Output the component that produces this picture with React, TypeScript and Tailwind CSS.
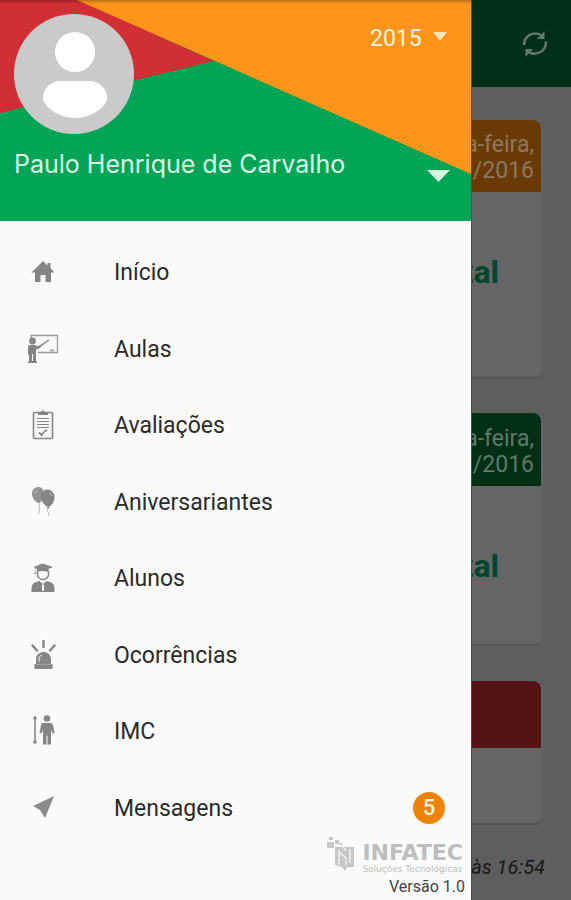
import { useState } from "react";
import type { ReactNode } from "react";

const HomeIcon = () => (
  <svg viewBox="0 0 32 32" className="w-8 h-8" fill="#858585">
    <path d="M16 5 4.500 16.500h3.500V26h5.500v-7h5v7H24v-9.500h3.500L23.500 12V7h-3v2.500z" />
  </svg>
);

const ClassIcon = () => (
  <svg viewBox="0 0 32 32" className="w-8 h-8" fill="none" stroke="#858585">
    <path d="M4 5V2.500h26.500v17H11" stroke="#999" strokeWidth="1.300" />
    <path d="M8 15.500 13 13l9-6" strokeWidth="1.500" />
    <path d="M23 17.500h4" strokeWidth="2" stroke="#aaa" />
    <circle cx="5.500" cy="8" r="3.400" fill="#858585" stroke="none" />
    <path
      d="M1 14q0-2 2-2h5l3 1.500 3-1.500.5 1.500-4 3-1.500-.5V28.500h1V30H1v-1.500h1v-7H1z"
      fill="#858585"
      stroke="none"
    />
    <path d="M5.500 21v7" stroke="#fafafa" />
  </svg>
);

const ClipboardIcon = () => (
  <svg viewBox="0 0 32 32" className="w-8 h-8" fill="none" stroke="#858585">
    <rect x="6.500" y="3.500" width="19" height="26" rx="1" strokeWidth="1.600" />
    <path d="M11 6V3.500h3a2 2 0 0 1 4 0h3V6z" fill="#858585" stroke="none" />
    <path d="M10 9.500h12M10 12.500h12M10 15.500h12M10 18.500h12" strokeWidth="1" />
    <path d="m12 23.500 2.500 2.500q2-3.500 5.500-5" strokeWidth="1.800" />
  </svg>
);

const BalloonsIcon = () => (
  <svg viewBox="0 0 32 32" className="w-8 h-8" fill="none">
    <path d="M12 17q1 5 0 11M21 21q-2 3 0 5t0 4" stroke="#bbb" />
    <path d="M5 7.500C5 3.500 8 1 11.500 1S17 4 17 8s-2.500 8-5 9C8 16 5 12 5 7.500z" fill="#929292" />
    <path d="M14 10.500c0-4 2.800-7 6.500-7s7 3 7 7.500-2.500 8.500-6 10l1.500 1.500h-3l1-1.500c-3.500-1.500-7-6-7-10.500z" fill="#858585" />
    <path d="M7.500 8q.5-3 3-3.500" stroke="#c4c4c4" />
    <path d="M24.500 10q0-2-2-3.500" stroke="#bbb" />
  </svg>
);

const StudentIcon = () => (
  <svg viewBox="0 0 32 32" className="w-8 h-8" fill="#858585">
    <path d="M15.500 1.500 26 5 21.500 7v3q-6-2-11.500 0V7L6.500 5z" />
    <path d="M8.200 6v4l-1 2h2l-.5-2V6z" />
    <path d="M10.500 9v3.500a5.500 5 0 0 0 11 0V9" fill="none" stroke="#858585" strokeWidth="1.500" />
    <path d="M4.500 30v-4q.5-5 4.500-6l3.500-1 3.500 3 3.500-3 3.500 1q4 1 4.500 6v4z" />
    <path d="m15 23 1-1 1 1v5l-1 1.500-1-1.500z" fill="#fafafa" />
  </svg>
);

const SirenIcon = () => (
  <svg viewBox="0 0 32 32" className="w-8 h-8" fill="#858585">
    <path
      d="M16.500 2v6M5.500 6.500l4.500 5M27.500 6.500 23 11.500"
      fill="none"
      stroke="#858585"
      strokeWidth="2.500"
      strokeLinecap="round"
    />
    <path d="M9 25v-5a7.500 7 0 0 1 15 0v5h1.500v5h-18v-5z" />
    <path d="M12 23v-3q0-3 3-4" fill="none" stroke="#d4d4d4" strokeWidth="1.300" />
    <path d="M9 25.500h15" stroke="#a8a8a8" />
  </svg>
);

const HeightIcon = () => (
  <svg viewBox="0 0 32 32" className="w-8 h-8" fill="#858585">
    <path d="M8 3v25" stroke="#a0a0a0" strokeWidth="2" />
    <circle cx="8" cy="3" r="1.800" />
    <circle cx="8" cy="27" r="1.800" />
    <circle cx="20" cy="3.500" r="3.300" />
    <path d="M16.500 8h7q2 0 2.500 2l1.500 8-2 .5-1.500-4v15h-3.500v-9h-1v9H16v-15l-1.500 4-2-.5L14 10q.5-2 2.500-2z" />
  </svg>
);

const SendIcon = () => (
  <svg viewBox="0 0 32 32" className="w-8 h-8" fill="#8c8c8c">
    <path d="M27 4 6 14l7 4 5 8z" />
  </svg>
);

const RefreshIcon = () => (
  <svg viewBox="0 0 28 28" className="w-7 h-7" fill="none" stroke="#64796b" strokeWidth="2.500">
    <path d="M3 15C3 6 12 1 20 5" />
    <path d="M25 11.500C25.500 20.500 16.500 26 8 22.500" />
    <path d="M23.500 1v8h-8l4-3.500zM4.500 27v-8h8l-4 3.500z" fill="#64796b" stroke="none" />
  </svg>
);

const LogoMark = () => (
  <svg viewBox="0 0 30 36" className="w-[30px] h-9" fill="#c6c6c6">
    <path d="M1 6h7v6H1zM9 4h4v4H9zM3 1h4v3H3zM14 7h2v2h-2z" />
    <path d="M9 11h19v20h-7l-2 4-3-4-7-2z" />
    <path
      d="M13 14v15M13 16l7 6v8M17 11l3 4M24 13v14"
      fill="none"
      stroke="#fafafa"
      strokeWidth="1.200"
    />
  </svg>
);

const menu: { label: string; icon: ReactNode; badge?: number }[] = [
  { label: "Início", icon: <HomeIcon /> },
  { label: "Aulas", icon: <ClassIcon /> },
  { label: "Avaliações", icon: <ClipboardIcon /> },
  { label: "Aniversariantes", icon: <BalloonsIcon /> },
  { label: "Alunos", icon: <StudentIcon /> },
  { label: "Ocorrências", icon: <SirenIcon /> },
  { label: "IMC", icon: <HeightIcon /> },
  { label: "Mensagens", icon: <SendIcon />, badge: 5 },
];

const App = () => {
  const [year, setYear] = useState("2015");

  return (
    <div className="flex min-h-screen bg-[#5e5e5e] font-['Roboto',sans-serif]">
      {/* Drawer */}
      <aside className="flex-1 min-w-0 flex flex-col bg-[#fafafa]">
        <header className="relative h-[221px] overflow-hidden bg-[#02a456]">
          <svg
            viewBox="0 0 471 221"
            preserveAspectRatio="none"
            className="absolute inset-0 w-full h-full"
          >
            <path d="M0 0h80l134 61L0 113z" fill="#d02f36" />
            <path d="M77 0h394v174z" fill="#ff941b" />
          </svg>
          <div className="absolute inset-x-0 top-0 h-1 bg-linear-to-b from-black/25 to-transparent" />

          <div className="relative flex justify-between pl-[14px] pr-6 pt-[14px]">
            <svg viewBox="0 0 120 120" className="w-[120px] h-[120px]" fill="#fff">
              <circle cx="60" cy="60" r="60" fill="#cacaca" />
              <circle cx="61" cy="38" r="20" />
              <path d="M47 67h28c11 0 18 8 18 17 0 8-15 20-32 20S29 92 29 84c0-9 7-17 18-17z" />
            </svg>
            <div className="relative h-[50px]">
              <select
                aria-label="Ano"
                value={year}
                onChange={(e) => setYear(e.target.value)}
                className="appearance-none bg-transparent h-[50px] w-[77px] text-[23px] text-[#fff3dc]"
              >
                <option>2015</option>
                <option>2016</option>
              </select>
              <svg
                viewBox="0 0 14 9"
                className="absolute right-0 top-[18px] w-[14px] h-[9px] pointer-events-none"
                fill="#ffe3b8"
              >
                <path d="M0 0h14L7 9z" />
              </svg>
            </div>
          </div>

          <button className="relative w-full flex justify-between pl-[14px] pr-[21px] pt-[14px] text-left">
            <span className="font-['Inter',sans-serif] text-[25px] leading-8 text-[#dcfbe6]">
              Paulo Henrique de Carvalho
            </span>
            <svg viewBox="0 0 23 12" className="w-[23px] h-3 mt-[22px]" fill="#d4f5df">
              <path d="M0 0h23L11.500 12z" />
            </svg>
          </button>
        </header>

        <nav className="flex-1 grid grid-rows-8 pt-[13px]">
          {menu.map((item) => (
            <a key={item.label} href="#" className="flex items-center pl-[27px] pr-[26px]">
              {item.icon}
              <span className="ml-[55px] pt-[2px] text-[23px] text-[#2b2b2b]">{item.label}</span>
              {item.badge && (
                <span className="ml-auto flex items-center justify-center w-8 h-8 rounded-full bg-[#ee8206] text-[22px] font-medium text-[#fff3dc]">
                  {item.badge}
                </span>
              )}
            </a>
          ))}
        </nav>

        {/* Logo + version */}
        <footer className="h-[54px] flex flex-col items-end pr-[6px]">
          <div className="-mt-[10px] flex h-[42px] gap-[6px] text-[#bdbdbd] font-['DejaVu_Sans',sans-serif]">
            <LogoMark />
            <div className="pt-[6px] pr-[2px]">
              <div className="text-[22px] leading-[22px] font-bold">INFATEC</div>
              <div className="text-[9px] leading-[11px]">Soluções Tecnológicas</div>
            </div>
          </div>
          <p className="text-[16px] leading-[18px] text-[#444]">Versão 1.0</p>
        </footer>
      </aside>

      {/* Dimmed page behind the drawer */}
      <main className="w-[100px] shrink-0 overflow-hidden border-l border-[#4c4c4c] text-[23px]">
        <div className="h-[87px] flex items-center justify-end pr-[22px] bg-[#002f19]">
          <button aria-label="Atualizar">
            <RefreshIcon />
          </button>
        </div>

        <div className="mt-[33px] mr-7 h-[259px] rounded-r-lg overflow-hidden bg-[#656565] border-b-2 border-[#555]">
          <div className="h-[72px] flex flex-col items-end justify-center pt-1 pr-[7px] mr-[2px] bg-[#6a3a05] leading-[26px] text-[#8d7860] rounded-tr-lg whitespace-nowrap">
            <span>a-feira,</span>
            <span>/2016</span>
          </div>
          <p className="mt-[60px] pr-11 flex justify-end text-[32px] leading-10 font-bold text-[#00462c]">tal</p>
        </div>

        <div className="mt-[34px] mr-7 h-[233px] rounded-r-lg overflow-hidden bg-[#656565] border-b-2 border-[#555]">
          <div className="h-[73px] flex flex-col items-end justify-center pt-1 pr-[7px] mr-[2px] bg-[#002f16] leading-[26px] text-[#5f7a68] rounded-tr-lg whitespace-nowrap">
            <span>a-feira,</span>
            <span>/2016</span>
          </div>
          <p className="mt-[60px] pr-11 flex justify-end text-[32px] leading-10 font-bold text-[#00462c]">tal</p>
        </div>

        <div className="mt-[35px] mr-7 h-[144px] rounded-r-lg overflow-hidden bg-[#656565] border-b-2 border-[#555]">
          <div className="h-[67px] mr-[2px] bg-[#541314] rounded-tr-lg" />
        </div>

        <p className="mt-7 pr-[26px] flex justify-end text-[20px] leading-7 italic text-[#161616] whitespace-nowrap">
          às 16:54
        </p>
      </main>
    </div>
  );
};
export default App;
